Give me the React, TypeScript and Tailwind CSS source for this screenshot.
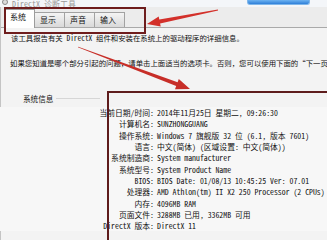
import React from 'react';

const rows: [string, string][] = [
  ['当前日期/时间:', '2014年11月25日 星期二, 09:26:30'],
  ['计算机名:', 'SUNZHONGGUANG'],
  ['操作系统:', 'Windows 7 旗舰版 32 位 (6.1, 版本 7601)'],
  ['语言:', '中文(简体) (区域设置: 中文(简体))'],
  ['系统制造商:', 'System manufacturer'],
  ['系统型号:', 'System Product Name'],
  ['BIOS:', 'BIOS Date: 01/08/13 10:45:25 Ver: 07.01'],
  ['处理器:', 'AMD Athlon(tm) II X2 250 Processor (2 CPUs)'],
  ['内存:', '4096MB RAM'],
  ['页面文件:', '3288MB 已用, 3362MB 可用'],
  ['DirectX 版本:', 'DirectX 11'],
];

const tabs = ['系统', '显示', '声音', '输入'];

const App: React.FC = () => {
  return (
    <div className="relative w-[327px] h-[240px] overflow-hidden bg-[#ebebeb] text-[#111] font-['Noto_Sans_Mono_CJK_SC','Noto_Sans_CJK_SC',monospace]">
      {/* title bar */}
      <div className="h-[7px] flex items-end overflow-hidden bg-[#f4f6f9] relative">
        <div className="w-[6px] h-[6px] ml-[2px] mb-[2px] rounded-full border border-[#8a8a8a] bg-[#dcdcdc]"></div>
        <div className="ml-[4px] text-[8px] leading-[8px] mb-[-1px] text-[#9a9a9a]">DirectX 诊断工具</div>
        <div className="ml-auto mr-[17px] w-[63px] h-[5px] self-start rounded-b-[3px] bg-gradient-to-b from-[#6db3f2] to-[#2e7fd8] border border-t-0 border-[#7fb6ea]"></div>
      </div>

      <div className="flex h-[233px]">
        {/* left frame */}
        <div className="w-[7px] bg-[#dedfe1] border-r border-[#c4c4c4]"></div>

        <div className="flex-1 flex flex-col">
          {/* tab strip */}
          <div className="h-[21px] flex items-end pl-[4px] bg-[#ececec] border-b border-[#a9a9a9]">
            {tabs.map((t, i) =>
              i === 0 ? (
                <div key={t} className="w-[30px] h-[19px] mb-[-1px] pl-[4px] pt-[2px] bg-white border border-b-0 border-[#9c9c9c] text-[8px] leading-[10px]">
                  {t}
                </div>
              ) : (
                <div key={t} className="w-[30px] h-[15px] pl-[5px] pt-[2px] bg-gradient-to-b from-[#f4f4f4] to-[#d9d9d9] border border-b-0 border-l-0 border-[#a2a2a2] text-[8px] leading-[10px]">
                  {t}
                </div>
              )
            )}
          </div>

          {/* panel */}
          <div className="flex-1 bg-[#f3f3f3] pl-[10px] pt-[4px] text-[7.4px] leading-[11px] whitespace-nowrap">
            <div>该工具报告有关 DirectX 组件和安装在系统上的驱动程序的详细信息。</div>
            <div className="mt-[14px] ml-[-1px]">如果您知道是哪个部分引起的问题，请单击上面适当的选项卡。否则，您可以使用下面的“下一页”按钮。</div>

            <div className="mt-[25px] ml-[12px] flex items-center">
              <span className="text-[7.6px]">系统信息</span>
              <div className="ml-[3px] w-[44px] h-px bg-[#d6d6d6]"></div>
            </div>

            <div className="mt-[3px] ml-[-17px] bg-[#f7f7f7]">
              {rows.map(([k, v]) => (
                <div key={k} className="flex h-[11.3px] items-center text-[7.8px]">
                  <div className="w-[163px] text-right pr-[3px]">{k}</div>
                  <div>{v}</div>
                </div>
              ))}
            </div>
          </div>
        </div>
      </div>

      {/* annotation boxes */}
      <div className="absolute left-[4px] top-[7px] w-[142px] h-[27px] border-2 border-[#6e1d1d]"></div>
      <div className="absolute left-[107px] top-[91px] w-[240px] h-[170px] border-2 border-[#5e1c1c]"></div>

      {/* annotation arrows */}
      <svg className="absolute left-0 top-0" width="327" height="240" viewBox="0 0 327 240">
        <polygon
          points="217.9,9.5 159.3,19.5 158.7,16.6 147,24 160.7,26.4 160.1,23.5 218.1,10.5"
          fill="#d3302a"
        />
        <polygon
          points="78.14,46.63 177.6,82.2 178.8,79 190,89 175,89.2 176.2,86 77.86,47.37"
          fill="#c72e28"
        />
      </svg>
    </div>
  );
};

export default App;
